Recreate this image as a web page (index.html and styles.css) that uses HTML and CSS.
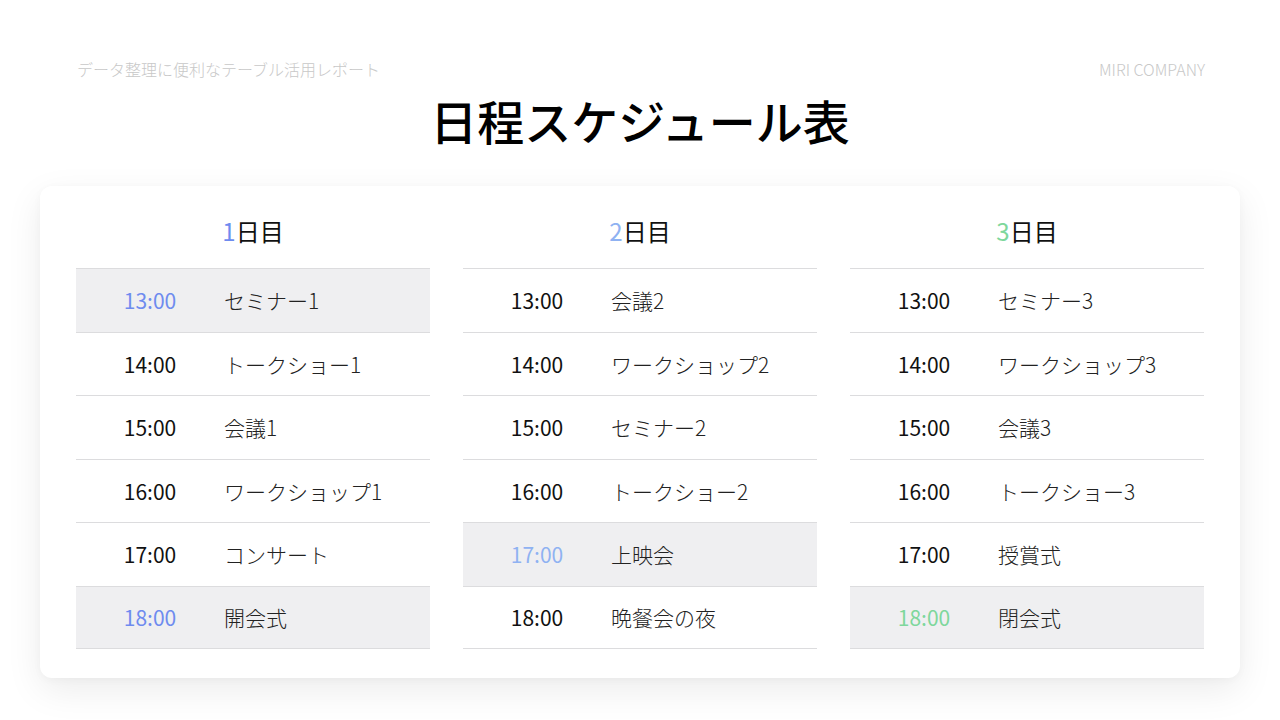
FILE: index.html
```html
<!DOCTYPE html>
<html lang="ja">
<head>
<meta charset="utf-8">
<link rel="stylesheet" href="styles.css">
</head>
<body>
<div class="page">
  <header class="top">
    <span class="sub">データ整理に便利なテーブル活用レポート</span>
    <span class="company">MIRI COMPANY</span>
  </header>
  <h1 class="title">日程スケジュール表</h1>
  <section class="card">
    <div class="day">
      <div class="day-head"><span class="num blue">1</span>日目</div>
      <div class="row hl"><span class="time blue">13:00</span><span class="ev">セミナー1</span></div>
      <div class="row"><span class="time">14:00</span><span class="ev">トークショー1</span></div>
      <div class="row"><span class="time">15:00</span><span class="ev">会議1</span></div>
      <div class="row"><span class="time">16:00</span><span class="ev">ワークショップ1</span></div>
      <div class="row"><span class="time">17:00</span><span class="ev">コンサート</span></div>
      <div class="row hl"><span class="time blue">18:00</span><span class="ev">開会式</span></div>
    </div>
    <div class="day">
      <div class="day-head"><span class="num light">2</span>日目</div>
      <div class="row"><span class="time">13:00</span><span class="ev">会議2</span></div>
      <div class="row"><span class="time">14:00</span><span class="ev">ワークショップ2</span></div>
      <div class="row"><span class="time">15:00</span><span class="ev">セミナー2</span></div>
      <div class="row"><span class="time">16:00</span><span class="ev">トークショー2</span></div>
      <div class="row hl"><span class="time light">17:00</span><span class="ev">上映会</span></div>
      <div class="row"><span class="time">18:00</span><span class="ev">晩餐会の夜</span></div>
    </div>
    <div class="day">
      <div class="day-head"><span class="num green">3</span>日目</div>
      <div class="row"><span class="time">13:00</span><span class="ev">セミナー3</span></div>
      <div class="row"><span class="time">14:00</span><span class="ev">ワークショップ3</span></div>
      <div class="row"><span class="time">15:00</span><span class="ev">会議3</span></div>
      <div class="row"><span class="time">16:00</span><span class="ev">トークショー3</span></div>
      <div class="row"><span class="time">17:00</span><span class="ev">授賞式</span></div>
      <div class="row hl"><span class="time green">18:00</span><span class="ev">閉会式</span></div>
    </div>
  </section>
</div>
</body>
</html>
```
FILE: styles.css
```css
* { box-sizing: border-box; }
html, body { margin: 0; padding: 0; background: #fff; }
body {
  font-family: "Noto Sans CJK JP", "Noto Sans", sans-serif;
  color: #111;
  width: 1280px;
  height: 720px;
  overflow: hidden;
}
.page { padding-top: 57px; }
.top {
  display: flex;
  justify-content: space-between;
  padding: 0 75px 0 77px;
  font-size: 16px;
  line-height: 24px;
  color: #c8c8c8;
  font-weight: 300;
}
.sub { font-family: "Noto Sans CJK JP", sans-serif; font-weight: 300; }
.company { font-family: "Noto Sans CJK JP", sans-serif; font-weight: 300; }
.title {
  margin: 6px 0 0;
  text-align: center;
  font-family: "Noto Sans CJK JP", sans-serif;
  font-weight: 500;
  font-size: 47px;
  line-height: 66px;
  color: #000;
}
.card {
  margin: 33px 40px 0;
  background: #fff;
  border-radius: 12px;
  box-shadow: 0 12px 36px rgba(0, 0, 0, 0.08), 0 2px 8px rgba(0, 0, 0, 0.03);
  padding: 0 36px 29px;
  display: grid;
  grid-template-columns: repeat(3, 354px);
  column-gap: 33px;
}
.day-head {
  height: 82px;
  display: flex;
  align-items: center;
  justify-content: center;
  padding-top: 6px;
  font-family: "Noto Sans CJK JP", sans-serif;
  font-size: 24px;
  font-weight: 400;
  color: #111;
}
.num { font-weight: 400; }
.row {
  display: grid;
  grid-template-columns: 148px 1fr;
  align-items: center;
  height: 63.5px;
  border-top: 1.5px solid #dcdcde;
}
.row:last-child { border-bottom: 1.5px solid #dcdcde; }
.row.hl { background: #efeff1; }
.time {
  text-align: center;
  font-family: "Noto Sans CJK JP", sans-serif;
  font-size: 21px;
  font-weight: 400;
  color: #111;
}
.ev {
  font-family: "Noto Sans CJK JP", sans-serif;
  font-weight: 300;
  font-size: 21px;
  color: #222;
}
.blue { color: #6e8bef; }
.light { color: #8fb2f2; }
.green { color: #7ed79c; }
```
